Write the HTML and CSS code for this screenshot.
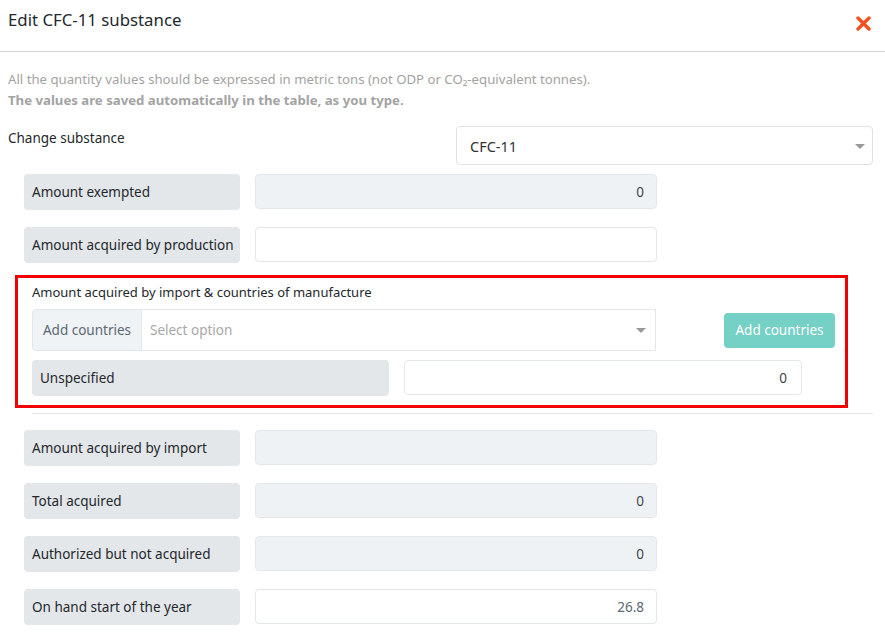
FILE: index.html
```html
<!DOCTYPE html>
<html lang="en">
<head>
<meta charset="utf-8">
<title>Edit CFC-11 substance</title>
<link rel="stylesheet" href="styles.css">
</head>
<body>
<div class="modal">
  <header class="modal-header">
    <h1 class="modal-title">Edit CFC-11 substance</h1>
    <button class="close-btn" aria-label="Close">
      <svg width="15" height="15" viewBox="0 0 15 15"><path d="M2 2 L13 13 M13 2 L2 13" stroke="#f4511e" stroke-width="3.4" stroke-linecap="round"/></svg>
    </button>
  </header>
  <div class="modal-body">
    <div class="info">
      <div>All the quantity values should be expressed in metric tons (not ODP or CO₂-equivalent tonnes).</div>
      <div class="info-bold">The values are saved automatically in the table, as you type.</div>
    </div>
    <div class="change-row">
      <div class="change-label">Change substance</div>
      <div class="select big-select">
        <span>CFC-11</span>
        <span class="caret"></span>
      </div>
    </div>

    <div class="rows">
      <div class="field-row">
        <div class="field-label">Amount exempted</div>
        <div class="field-input disabled">0</div>
      </div>
      <div class="field-row">
        <div class="field-label">Amount acquired by production</div>
        <div class="field-input"></div>
      </div>
    </div>

    <div class="import-box">
      <div class="import-title">Amount acquired by import &amp; countries of manufacture</div>
      <div class="import-controls">
        <div class="input-group">
          <div class="addon">Add countries</div>
          <div class="group-select">
            <span class="placeholder">Select option</span>
            <span class="caret"></span>
          </div>
        </div>
        <button class="add-btn">Add countries</button>
      </div>
      <div class="unspec-row">
        <div class="field-label unspec-label">Unspecified</div>
        <div class="field-input unspec-input">0</div>
      </div>
    </div>

    <div class="divider"></div>

    <div class="rows">
      <div class="field-row">
        <div class="field-label">Amount acquired by import</div>
        <div class="field-input disabled"></div>
      </div>
      <div class="field-row">
        <div class="field-label">Total acquired</div>
        <div class="field-input disabled">0</div>
      </div>
      <div class="field-row">
        <div class="field-label">Authorized but not acquired</div>
        <div class="field-input disabled">0</div>
      </div>
      <div class="field-row">
        <div class="field-label">On hand start of the year</div>
        <div class="field-input value-muted">26.8</div>
      </div>
    </div>
  </div>
</div>
</body>
</html>
```

FILE: styles.css
```css
* { box-sizing: border-box; }
html, body { margin: 0; padding: 0; background: #fff; }
body {
  font-family: "Noto Sans", "Open Sans", sans-serif;
  font-size: 13.5px;
  color: #23282c;
  overflow: hidden;
}
.modal { width: 885px; }
.modal-header {
  height: 52px;
  border-bottom: 1px solid #d2d2d2;
  display: flex;
  justify-content: space-between;
  align-items: flex-start;
  padding: 7px 14px 0 8px;
}
.modal-title {
  margin: 0;
  font-size: 16.8px;
  font-weight: 400;
  line-height: 26px;
  color: #23282c;
}
.close-btn {
  border: 0;
  background: none;
  padding: 0;
  margin-top: 9px;
  width: 16px;
  height: 16px;
  cursor: pointer;
}
.modal-body { padding: 0 12px 0 8px; }
.info {
  margin-top: 17px;
  font-size: 13.2px;
  line-height: 21px;
  color: #a3a3a3;
}
.info-bold { font-weight: 700; }
.change-row {
  display: flex;
  align-items: flex-start;
  margin-top: 15px;
}
.change-label {
  width: 448px;
  line-height: 22px;
  padding-top: 1px;
}
.select {
  position: relative;
  display: flex;
  align-items: center;
  background: #fff;
}
.big-select {
  flex: 1;
  height: 39px;
  border: 1px solid #e2e2e2;
  border-radius: 4px;
  padding-left: 13px;
  font-size: 14.5px;
  color: #333;
}
.caret {
  position: absolute;
  right: 7px;
  top: 50%;
  margin-top: -2px;
  width: 0;
  height: 0;
  border-left: 5px solid transparent;
  border-right: 5px solid transparent;
  border-top: 5px solid #999;
}
.rows { padding-left: 16px; }
.field-row {
  display: flex;
  gap: 15px;
  margin-top: 9px;
  margin-bottom: 8px;
}
.rows .field-row + .field-row { margin-top: 17px; }
.field-label {
  width: 216px;
  height: 36px;
  background: #e4e7ea;
  border-radius: 4px;
  padding-left: 8px;
  display: flex;
  align-items: center;
}
.field-input {
  width: 402px;
  height: 35px;
  border: 1px solid #e4e7ea;
  border-radius: 4px;
  background: #fff;
  display: flex;
  align-items: center;
  justify-content: flex-end;
  padding-right: 12px;
  color: #3d454c;
}
.field-input.disabled { background: #eff2f5; }
.value-muted { color: #5c6873; }

.import-box {
  margin: 12px 25px 0 7px;
  border: 3px solid #f00000;
  padding: 3px 0 9px 14px;
}
.import-title {
  font-size: 13px;
  line-height: 22px;
}
.import-controls {
  display: flex;
  align-items: center;
  margin-top: 6px;
}
.input-group {
  display: flex;
  width: 624px;
  height: 42px;
}
.addon {
  width: 110px;
  background: #f0f3f5;
  border: 1px solid #e4e7ea;
  border-radius: 4px 0 0 4px;
  display: flex;
  align-items: center;
  justify-content: center;
  color: #5c6873;
}
.group-select {
  position: relative;
  flex: 1;
  border: 1px solid #e4e7ea;
  border-left: 0;
  display: flex;
  align-items: center;
  padding-left: 8px;
}
.group-select .caret { right: 9px; }
.placeholder { color: #a8a8a8; }
.add-btn {
  margin-left: 68px;
  width: 111px;
  height: 35px;
  border: 0;
  border-radius: 4px;
  background: #75d0c5;
  color: #fff;
  font-family: inherit;
  font-size: 13.5px;
  padding: 0;
}
.unspec-row {
  display: flex;
  gap: 15px;
  margin-top: 9px;
}
.unspec-label { width: 357px; }
.unspec-input { width: 398px; padding-right: 14px; }
.divider {
  margin: 5px 0 0 24px;
  border-top: 1px solid #e6e6e6;
}
.divider + .rows .field-row:first-child { margin-top: 16px; }
```
